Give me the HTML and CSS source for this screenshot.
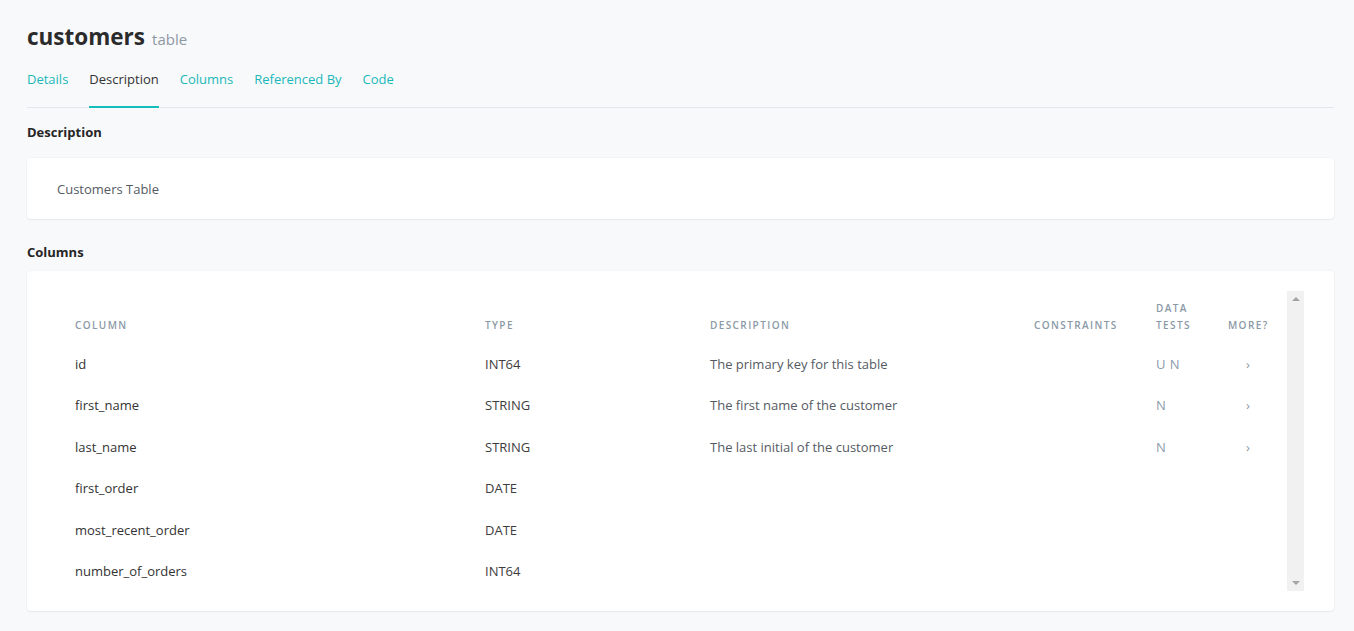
FILE: index.html
```html
<!DOCTYPE html>
<html>
<head>
<meta charset="utf-8">
<link rel="stylesheet" href="styles.css">
</head>
<body>
<div class="page">
  <h1 class="title">customers<span class="kind">table</span></h1>
  <nav class="tabs">
    <a class="tab">Details</a>
    <a class="tab active">Description</a>
    <a class="tab">Columns</a>
    <a class="tab">Referenced By</a>
    <a class="tab">Code</a>
  </nav>

  <h2 class="section-title first">Description</h2>
  <div class="card desc-card">Customers Table</div>

  <h2 class="section-title">Columns</h2>
  <div class="card cols-card">
    <div class="scroll">
      <table class="cols">
        <colgroup>
          <col class="c-name"><col class="c-type"><col class="c-desc"><col class="c-cons"><col class="c-tests"><col class="c-more">
        </colgroup>
        <thead>
          <tr>
            <th>Column</th>
            <th>Type</th>
            <th>Description</th>
            <th>Constraints</th>
            <th>Data<br>Tests</th>
            <th>More?</th>
          </tr>
        </thead>
        <tbody>
          <tr><td class="name">id</td><td class="type">INT64</td><td class="desc">The primary key for this table</td><td></td><td class="tests">U N</td><td class="more">›</td></tr>
          <tr><td class="name">first_name</td><td class="type">STRING</td><td class="desc">The first name of the customer</td><td></td><td class="tests">N</td><td class="more">›</td></tr>
          <tr><td class="name">last_name</td><td class="type">STRING</td><td class="desc">The last initial of the customer</td><td></td><td class="tests">N</td><td class="more">›</td></tr>
          <tr><td class="name">first_order</td><td class="type">DATE</td><td class="desc"></td><td></td><td class="tests"></td><td class="more"></td></tr>
          <tr><td class="name">most_recent_order</td><td class="type">DATE</td><td class="desc"></td><td></td><td class="tests"></td><td class="more"></td></tr>
          <tr><td class="name">number_of_orders</td><td class="type">INT64</td><td class="desc"></td><td></td><td class="tests"></td><td class="more"></td></tr>
        </tbody>
      </table>
    </div>
    <div class="scrollbar">
      <span class="arrow up"></span>
      <span class="arrow down"></span>
    </div>
  </div>
</div>
</body>
</html>
```
FILE: styles.css
```css
html, body {
  margin: 0;
  padding: 0;
  background: #f8f9fb;
  font-family: "Open Sans", "Noto Sans", sans-serif;
  color: #333;
}
.page {
  padding: 21px 20px 20px 27px;
  width: 1307px;
}
.title {
  margin: 0;
  font-size: 22.5px;
  line-height: 32px;
  font-weight: 700;
  color: #2b2b2b;
}
.kind {
  font-size: 15px;
  font-weight: 400;
  color: #8e98a3;
  margin-left: 7px;
}
.tabs {
  display: flex;
  gap: 21px;
  margin-top: 3px;
  border-bottom: 1px solid #e4e7eb;
}
.tab {
  font-size: 13px;
  line-height: 18px;
  padding: 12px 0 18px;
  margin-bottom: -1px;
  border-bottom: 2px solid transparent;
  color: #1ab8b8;
  cursor: pointer;
}
.tab.active {
  color: #333;
  border-bottom-color: #15bdbd;
}
.section-title {
  margin: 24px 0 10px;
  font-size: 13px;
  line-height: 18px;
  font-weight: 700;
  color: #262626;
}
.section-title.first {
  margin-top: 15px;
  margin-bottom: 17px;
}
.card {
  background: #fff;
  border-radius: 4px;
  box-shadow: 0 1px 2px rgba(0, 0, 0, 0.06), 0 0 0 1px rgba(0, 0, 0, 0.015);
}
.desc-card {
  padding: 22px 30px 21px;
  font-size: 13px;
  line-height: 18px;
  color: #555b63;
}
.cols-card {
  display: flex;
  padding: 20px 30px 20px 20px;
}
.scroll {
  flex: 1;
  height: 300px;
  overflow: hidden;
}
.cols {
  width: 100%;
  border-collapse: collapse;
  table-layout: fixed;
}
.c-name { width: 410px; }
.c-type { width: 225px; }
.c-desc { width: 324px; }
.c-cons { width: 122px; }
.c-tests { width: 72px; }
.cols th {
  text-align: left;
  vertical-align: bottom;
  font-size: 10px;
  line-height: 17px;
  font-weight: 600;
  letter-spacing: 1.4px;
  text-transform: uppercase;
  color: #8b99a6;
  padding: 8.5px 0 10.2px 28px;
}
.cols td {
  font-size: 13px;
  line-height: 17.5px;
  padding: 12px 0 12px 28px;
  white-space: nowrap;
}
.cols td.name { color: #333; }
.cols td.type { color: #3d3d3d; }
.cols td.desc { color: #555b63; }
.cols td.tests { color: #8b9cab; letter-spacing: 0.5px; }
.cols td.more {
  color: #8b99a6;
  padding-left: 46px;
}
.scrollbar {
  width: 17px;
  height: 300px;
  background: #f1f1f1;
  display: flex;
  flex-direction: column;
  justify-content: space-between;
  align-items: center;
  padding: 6px 0;
  box-sizing: border-box;
}
.arrow {
  width: 0;
  height: 0;
  border-left: 4px solid transparent;
  border-right: 4px solid transparent;
}
.arrow.up {
  border-bottom: 4px solid #a3a3a3;
}
.arrow.down {
  border-top: 4px solid #a3a3a3;
}
```
